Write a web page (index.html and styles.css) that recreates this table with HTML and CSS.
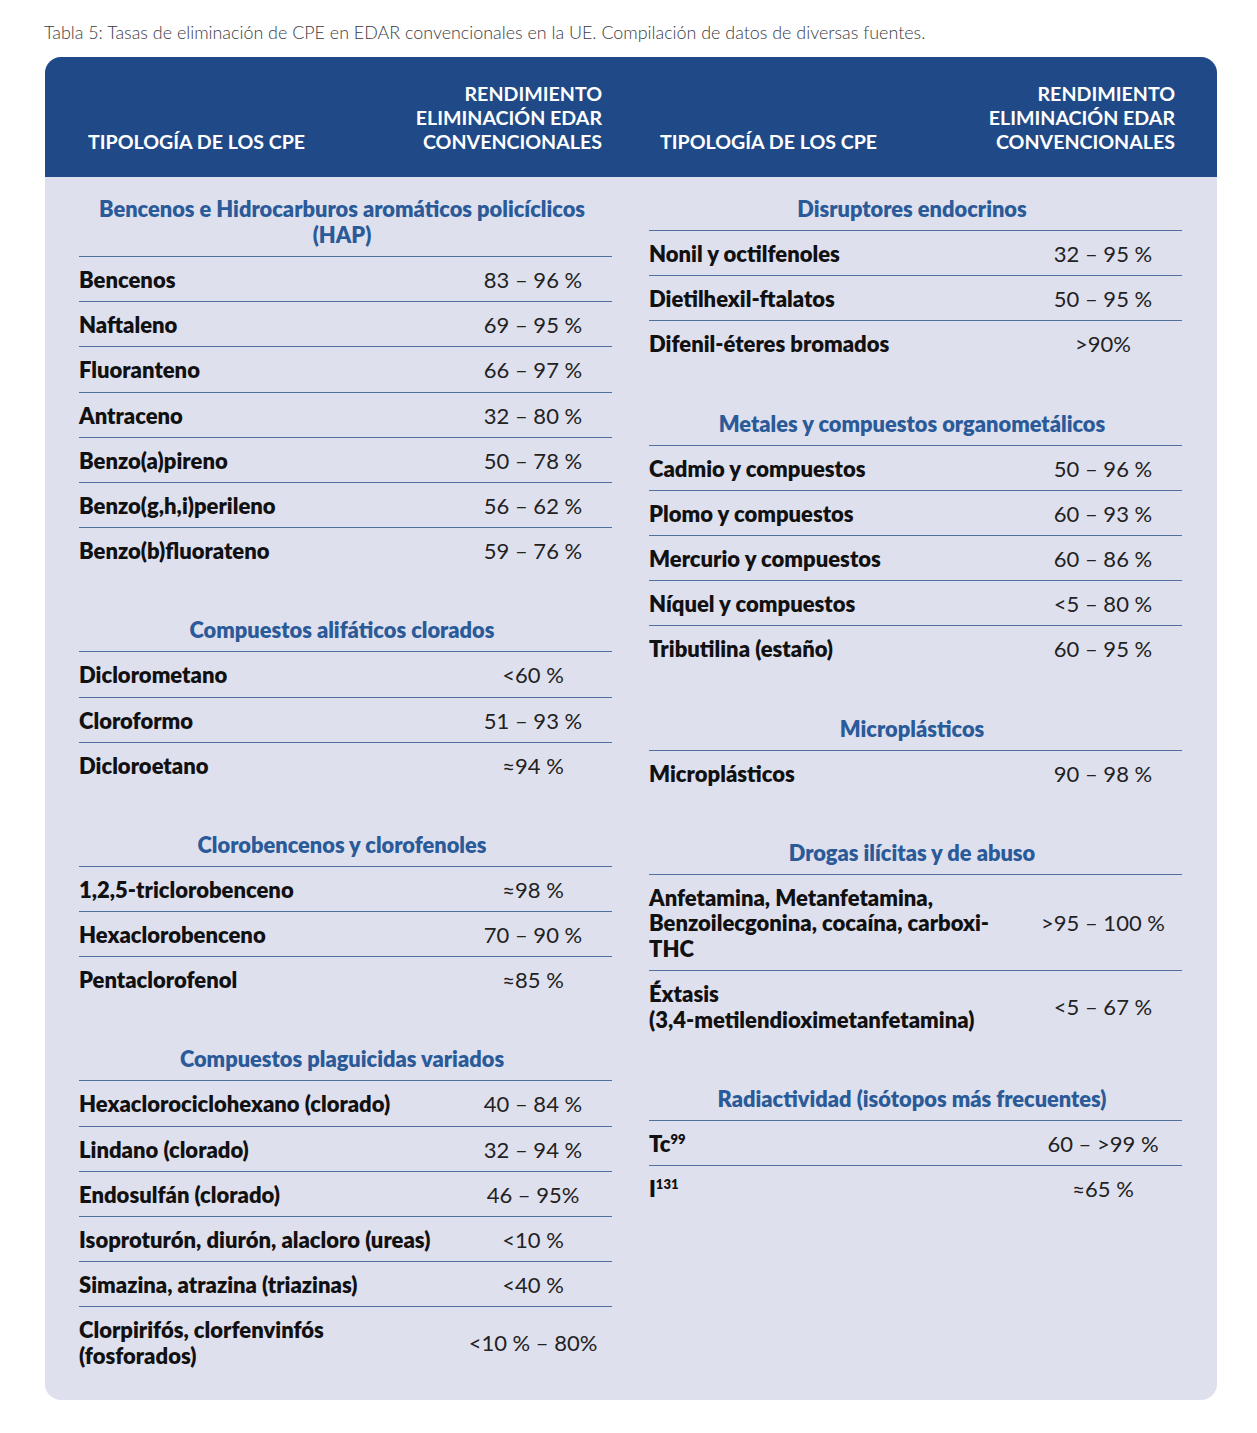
FILE: index.html
```html
<!DOCTYPE html>
<html lang="es">
<head>
<meta charset="utf-8">
<title>Tabla 5</title>
<link rel="stylesheet" href="styles.css">
</head>
<body>
<div class="page">
  <p class="caption">Tabla 5: Tasas de eliminación de CPE en EDAR convencionales en la UE. Compilación de datos de diversas fuentes.</p>
  <div class="card">
    <div class="head">
      <div class="head-half">
        <div class="h-name">TIPOLOGÍA DE LOS CPE</div>
        <div class="h-val">RENDIMIENTO<br>ELIMINACIÓN EDAR<br>CONVENCIONALES</div>
      </div>
      <div class="head-half">
        <div class="h-name">TIPOLOGÍA DE LOS CPE</div>
        <div class="h-val">RENDIMIENTO<br>ELIMINACIÓN EDAR<br>CONVENCIONALES</div>
      </div>
    </div>
    <div class="body">
      <div class="col">
        <section class="sec">
          <h3 class="sec-title">Bencenos e Hidrocarburos aromáticos policíclicos<br>(HAP)</h3>
          <div class="row"><span class="name">Bencenos</span><span class="val">83 – 96 %</span></div>
          <div class="row"><span class="name">Naftaleno</span><span class="val">69 – 95 %</span></div>
          <div class="row"><span class="name">Fluoranteno</span><span class="val">66 – 97 %</span></div>
          <div class="row"><span class="name">Antraceno</span><span class="val">32 – 80 %</span></div>
          <div class="row"><span class="name">Benzo(a)pireno</span><span class="val">50 – 78 %</span></div>
          <div class="row"><span class="name">Benzo(g,h,i)perileno</span><span class="val">56 – 62 %</span></div>
          <div class="row"><span class="name">Benzo(b)fluorateno</span><span class="val">59 – 76 %</span></div>
        </section>
        <section class="sec">
          <h3 class="sec-title">Compuestos alifáticos clorados</h3>
          <div class="row"><span class="name">Diclorometano</span><span class="val">&lt;60 %</span></div>
          <div class="row"><span class="name">Cloroformo</span><span class="val">51 – 93 %</span></div>
          <div class="row"><span class="name">Dicloroetano</span><span class="val">≈94 %</span></div>
        </section>
        <section class="sec">
          <h3 class="sec-title">Clorobencenos y clorofenoles</h3>
          <div class="row"><span class="name">1,2,5-triclorobenceno</span><span class="val">≈98 %</span></div>
          <div class="row"><span class="name">Hexaclorobenceno</span><span class="val">70 – 90 %</span></div>
          <div class="row"><span class="name">Pentaclorofenol</span><span class="val">≈85 %</span></div>
        </section>
        <section class="sec">
          <h3 class="sec-title">Compuestos plaguicidas variados</h3>
          <div class="row"><span class="name">Hexaclorociclohexano (clorado)</span><span class="val">40 – 84 %</span></div>
          <div class="row"><span class="name">Lindano (clorado)</span><span class="val">32 – 94 %</span></div>
          <div class="row"><span class="name">Endosulfán (clorado)</span><span class="val">46 – 95%</span></div>
          <div class="row"><span class="name">Isoproturón, diurón, alacloro (ureas)</span><span class="val">&lt;10 %</span></div>
          <div class="row"><span class="name">Simazina, atrazina (triazinas)</span><span class="val">&lt;40 %</span></div>
          <div class="row"><span class="name">Clorpirifós, clorfenvinfós<br>(fosforados)</span><span class="val">&lt;10 % – 80%</span></div>
        </section>
      </div>
      <div class="col">
        <section class="sec">
          <h3 class="sec-title">Disruptores endocrinos</h3>
          <div class="row"><span class="name">Nonil y octilfenoles</span><span class="val">32 – 95 %</span></div>
          <div class="row"><span class="name">Dietilhexil-ftalatos</span><span class="val">50 – 95 %</span></div>
          <div class="row"><span class="name">Difenil-éteres bromados</span><span class="val">&gt;90%</span></div>
        </section>
        <section class="sec">
          <h3 class="sec-title">Metales y compuestos organometálicos</h3>
          <div class="row"><span class="name">Cadmio y compuestos</span><span class="val">50 – 96 %</span></div>
          <div class="row"><span class="name">Plomo y compuestos</span><span class="val">60 – 93 %</span></div>
          <div class="row"><span class="name">Mercurio y compuestos</span><span class="val">60 – 86 %</span></div>
          <div class="row"><span class="name">Níquel y compuestos</span><span class="val">&lt;5 – 80 %</span></div>
          <div class="row"><span class="name">Tributilina (estaño)</span><span class="val">60 – 95 %</span></div>
        </section>
        <section class="sec">
          <h3 class="sec-title">Microplásticos</h3>
          <div class="row"><span class="name">Microplásticos</span><span class="val">90 – 98 %</span></div>
        </section>
        <section class="sec">
          <h3 class="sec-title">Drogas ilícitas y de abuso</h3>
          <div class="row"><span class="name">Anfetamina, Metanfetamina,<br>Benzoilecgonina, cocaína, carboxi-<br>THC</span><span class="val">&gt;95 – 100 %</span></div>
          <div class="row"><span class="name">Éxtasis<br>(3,4-metilendioximetanfetamina)</span><span class="val">&lt;5 – 67 %</span></div>
        </section>
        <section class="sec">
          <h3 class="sec-title">Radiactividad (isótopos más frecuentes)</h3>
          <div class="row"><span class="name">Tc<sup>99</sup></span><span class="val">60 – &gt;99 %</span></div>
          <div class="row"><span class="name">I<sup>131</sup></span><span class="val">≈65 %</span></div>
        </section>
      </div>
    </div>
  </div>
</div>
</body>
</html>
```

FILE: styles.css
```css
html, body {
  margin: 0;
  padding: 0;
  background: #ffffff;
}

body {
  font-family: Lato, "Open Sans", sans-serif;
  color: #1a1a1a;
}

.page {
  padding: 21px 40px 32px 45px;
}

.caption {
  margin: 0 0 14px -1px;
  font-size: 17.9px;
  line-height: 22px;
  font-weight: 300;
  color: #3a3a42;
}

.card {
  border-radius: 16px;
  overflow: hidden;
  background: #dfe0ee;
}

.head {
  background: #1f4a87;
  color: #ffffff;
  display: grid;
  grid-template-columns: 533px 533px;
  column-gap: 37px;
  padding: 25px 35px 23px 34px;
}

.head-half {
  display: flex;
  justify-content: space-between;
  align-items: flex-end;
  padding: 0 10px 0 9px;
  font-weight: 700;
  font-size: 19.6px;
  line-height: 24px;
}

.head-half + .head-half {
  padding: 0 7px 0 11px;
}

.h-val {
  text-align: right;
}

.body {
  display: grid;
  grid-template-columns: 533px 533px;
  column-gap: 37px;
  padding: 19px 35px 23px 34px;
  align-items: start;
}

.sec + .sec {
  margin-top: 45px;
}

.sec-title {
  margin: 0;
  padding: 0 7px 8px 0;
  text-align: center;
  font-size: 21.8px;
  line-height: 26px;
  font-weight: 800;
  color: #2a5a98;
}

.row {
  display: grid;
  grid-template-columns: 1fr 158px;
  align-items: center;
  border-top: 1px solid #52709f;
  padding: 10px 0 8.6px;
}

.name {
  font-weight: 800;
  font-size: 22px;
  line-height: 25.6px;
  color: #111111;
}

.name sup {
  font-size: 13px;
  line-height: 0;
  vertical-align: 8px;
}

.val {
  text-align: center;
  font-size: 22px;
  line-height: 25.6px;
  font-weight: 400;
  color: #222222;
}
```
